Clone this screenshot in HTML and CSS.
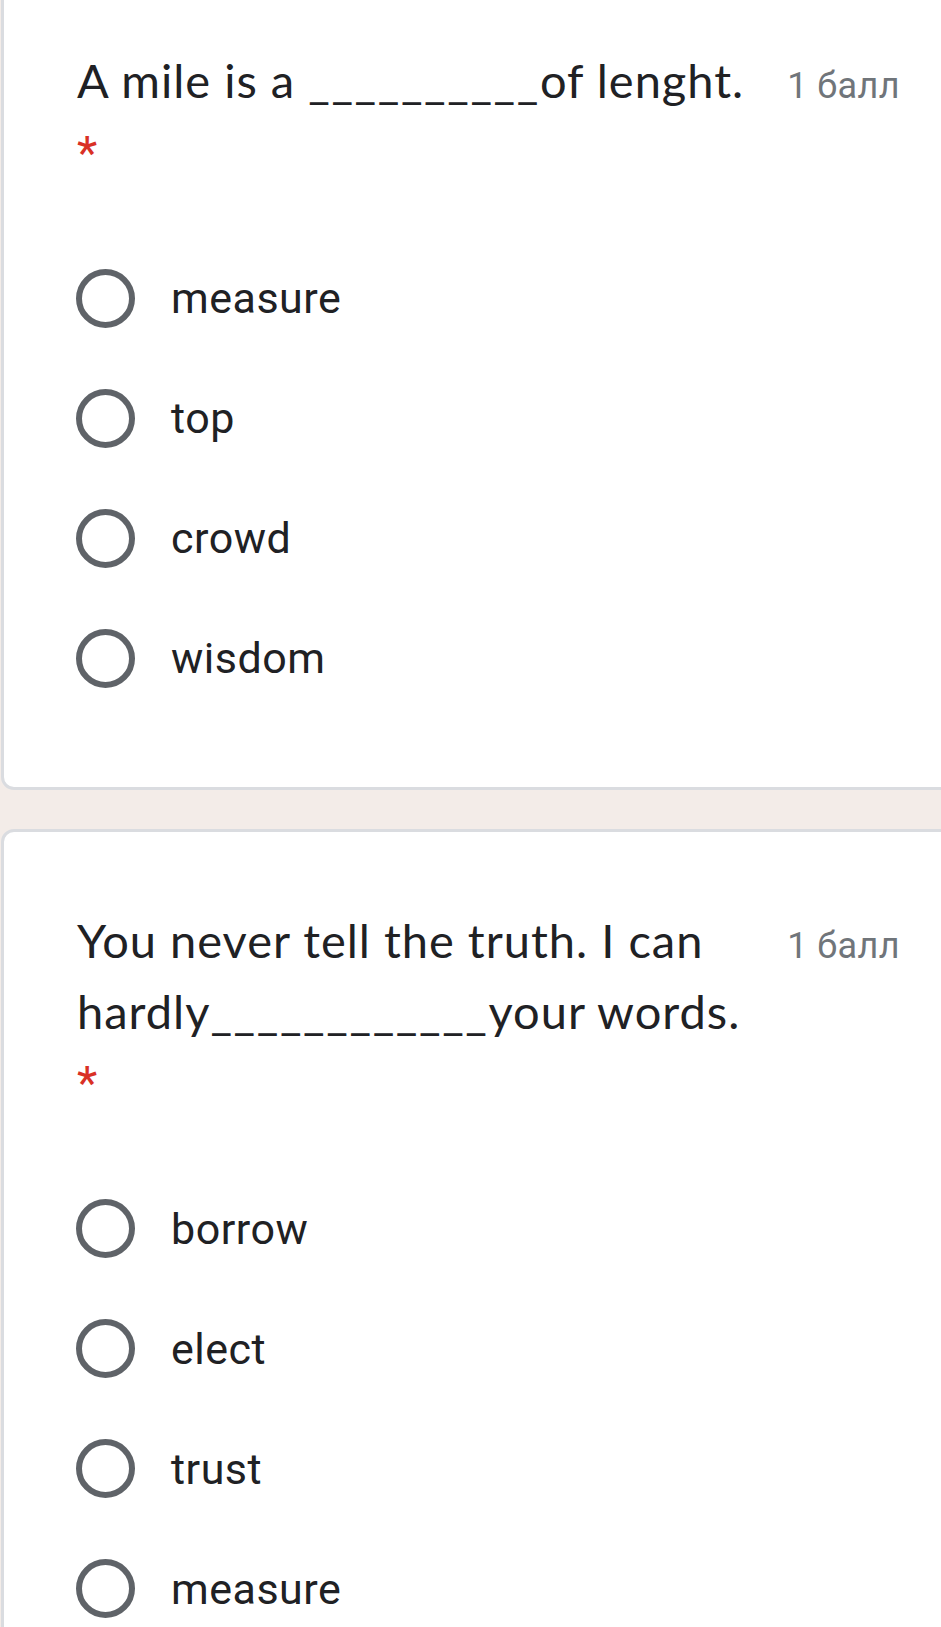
FILE: index.html
```html
<!DOCTYPE html>
<html lang="ru">
<head>
<meta charset="utf-8">
<title>Тест</title>
<link rel="stylesheet" href="styles.css">
</head>
<body>
<main class="form">
  <section class="card">
    <div class="q-head">
      <div class="q-title"><span>A mile is a </span><span class="blank">__________</span><span>of lenght.</span><span class="req"> *</span></div>
      <div class="q-points">1 балл</div>
    </div>
    <div class="options">
      <label class="option"><span class="radio"></span><span class="opt-text">measure</span></label>
      <label class="option"><span class="radio"></span><span class="opt-text">top</span></label>
      <label class="option"><span class="radio"></span><span class="opt-text">crowd</span></label>
      <label class="option"><span class="radio"></span><span class="opt-text">wisdom</span></label>
    </div>
  </section>
  <section class="card">
    <div class="q-head">
      <div class="q-title"><span>You never tell the truth. I can </span><span>hardly</span><span class="blank">____________</span><span>your words.</span><span class="req"> *</span></div>
      <div class="q-points">1 балл</div>
    </div>
    <div class="options">
      <label class="option"><span class="radio"></span><span class="opt-text">borrow</span></label>
      <label class="option"><span class="radio"></span><span class="opt-text">elect</span></label>
      <label class="option"><span class="radio"></span><span class="opt-text">trust</span></label>
      <label class="option"><span class="radio"></span><span class="opt-text">measure</span></label>
    </div>
  </section>
</main>
</body>
</html>
```

FILE: styles.css
```css
html, body {
  margin: 0;
  padding: 0;
}

body {
  background: #f3ece8;
  overflow: hidden;
  color: #202124;
}

.form {
  display: flex;
  flex-direction: column;
  gap: 39px;
  padding-left: 1px;
  margin-right: -40px;
}

.card {
  background: #fff;
  border: 3px solid #dadce0;
  border-radius: 13px;
  padding: 73px 78px 69px 73px;
}

.card:first-child {
  margin-top: -31px;
}

.q-head {
  display: flex;
  align-items: baseline;
}

.q-title {
  flex: 1;
  font-family: "Lato", "Noto Sans", sans-serif;
  font-size: 47px;
  line-height: 70.5px;
  letter-spacing: 1px;
  color: #202124;
}

.blank {
  letter-spacing: 1.6px;
}

.req {
  font-family: "Roboto", "Noto Sans", sans-serif;
  line-height: 1;
  color: #d93025;
}

.q-points {
  margin-left: 30px;
  font-family: "Roboto", "Noto Sans", sans-serif;
  font-size: 36px;
  letter-spacing: 0.4px;
  color: #70757a;
  white-space: nowrap;
}

.options {
  display: flex;
  flex-direction: column;
  margin-top: 52px;
  margin-left: -1px;
}

.option {
  display: flex;
  align-items: center;
  min-height: 120px;
}

.radio {
  box-sizing: border-box;
  width: 59px;
  height: 59px;
  border: 6px solid #5f6368;
  border-radius: 50%;
  flex: none;
}

.opt-text {
  margin-left: 36px;
  font-family: "Roboto", "Noto Sans", sans-serif;
  font-size: 43px;
  letter-spacing: 0.5px;
  color: #202124;
}
```
